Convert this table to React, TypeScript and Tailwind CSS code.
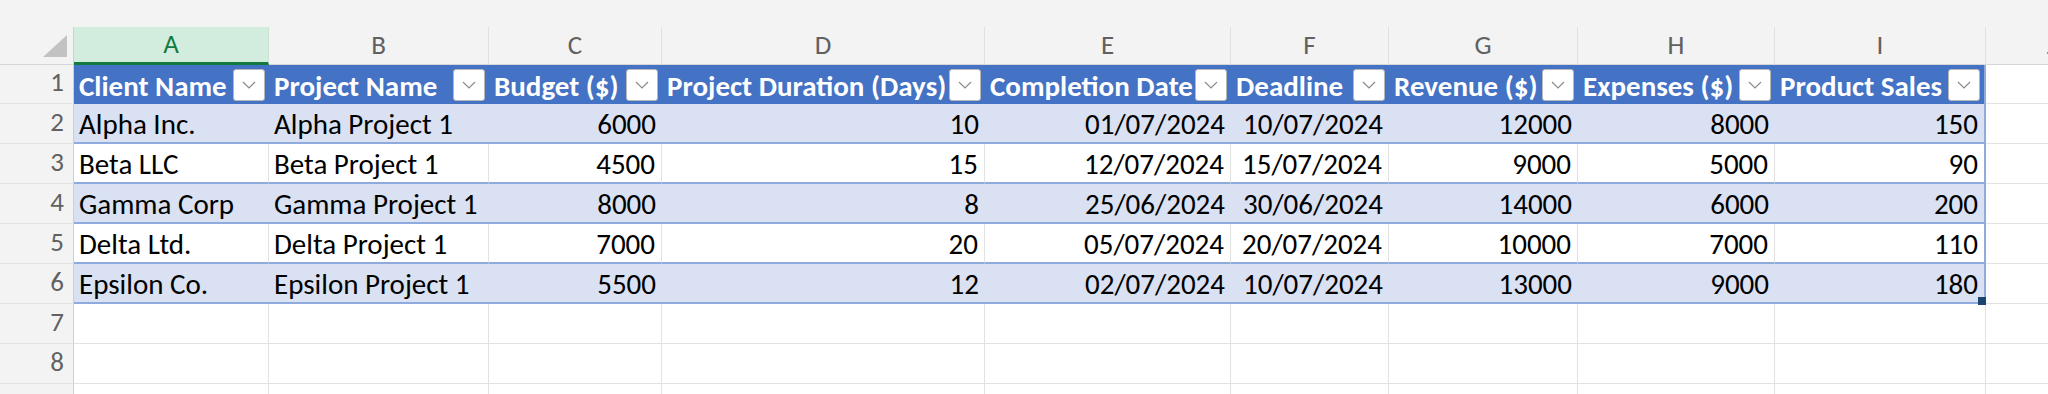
type Cell = string | number

const COLS = [
  { key: 'A', w: 'w-[195px]' },
  { key: 'B', w: 'w-[220px]' },
  { key: 'C', w: 'w-[173px]' },
  { key: 'D', w: 'w-[323px]' },
  { key: 'E', w: 'w-[246px]' },
  { key: 'F', w: 'w-[158px]' },
  { key: 'G', w: 'w-[189px]' },
  { key: 'H', w: 'w-[197px]' },
  { key: 'I', w: 'w-[211px]' },
]

const HEADERS = ['Client Name', 'Project Name', 'Budget ($)', 'Project Duration (Days)', 'Completion Date', 'Deadline', 'Revenue ($)', 'Expenses ($)', 'Product Sales']

const ROWS: Cell[][] = [
  ['Alpha Inc.', 'Alpha Project 1', 6000, 10, '01/07/2024', '10/07/2024', 12000, 8000, 150],
  ['Beta LLC', 'Beta Project 1', 4500, 15, '12/07/2024', '15/07/2024', 9000, 5000, 90],
  ['Gamma Corp', 'Gamma Project 1', 8000, 8, '25/06/2024', '30/06/2024', 14000, 6000, 200],
  ['Delta Ltd.', 'Delta Project 1', 7000, 20, '05/07/2024', '20/07/2024', 10000, 7000, 110],
  ['Epsilon Co.', 'Epsilon Project 1', 5500, 12, '02/07/2024', '10/07/2024', 13000, 9000, 180],
]

// right aligned: numbers and dates
const isRight = (ci: number) => ci >= 2

function RowHead({ n, h }: { n?: number; h: string }) {
  return (
    <div className={`w-[74px] shrink-0 ${h} flex items-end justify-end pr-[9px] pb-[1px] bg-[#f3f3f3] border-r border-b border-r-[#cfcfcf] border-b-[#e2e2e2] text-[27px] text-[#616161]`}>
      {n}
    </div>
  )
}

function Dropdown() {
  return (
    <div className="w-[32px] h-[32px] shrink-0 mr-[4px] self-center bg-white border border-[#b8b8b8] rounded-[3px] grid place-items-center">
      <svg width="14" height="8" viewBox="0 0 14 8" fill="none">
        <polyline points="1,1 7,7 13,1" stroke="#8a8a8a" strokeWidth="1.2" />
      </svg>
    </div>
  )
}

export default function App() {
  return (
    <div className="w-[2048px] h-[394px] overflow-hidden bg-white font-[Carlito,Lato,sans-serif] text-black">
      <div className="h-[27px] bg-[#f3f3f3]" />

      {/* column letters */}
      <div className="flex h-[38px] bg-[#f3f3f3]">
        <div className="w-[74px] shrink-0 flex items-end justify-end pr-[6px] pb-[7px] border-r border-b border-r-[#cfcfcf] border-b-[#d6d6d6]">
          <svg width="24" height="22" viewBox="0 0 24 22">
            <polygon points="24,0 24,22 0,22" fill="#c2c2c2" />
          </svg>
        </div>
        {COLS.map(c => (
          <div
            key={c.key}
            className={`${c.w} shrink-0 flex items-center justify-center text-[27px] ${c.key === 'A' ? 'bg-[#d2eddd] text-[#127a3f] border-b-[3px] border-b-[#127a3f] border-r border-r-[#c9e2d2]' : 'text-[#616161] border-b border-r border-b-[#d6d6d6] border-r-[#e0e0e0]'}`}
          >
            {c.key}
          </div>
        ))}
        <div className="w-[130px] shrink-0 flex items-center justify-center text-[27px] text-[#616161] border-b border-b-[#d6d6d6]">J</div>
      </div>

      {/* row 1: table header */}
      <div className="flex h-[39px]">
        <RowHead n={1} h="h-[39px]" />
        {COLS.map((c, ci) => (
          <div key={c.key} className={`${c.w} shrink-0 flex bg-[#4472c4] text-white font-bold text-[29px] ${ci === 8 ? 'border-r-2 border-r-[#8faadc]' : ''}`}>
            <span className="flex-1 self-end pl-[5px] whitespace-nowrap overflow-hidden leading-[35px]">{HEADERS[ci]}</span>
            <Dropdown />
          </div>
        ))}
        <div className="w-[130px] shrink-0 border-b border-b-[#e2e2e2]" />
      </div>

      {/* data rows */}
      {ROWS.map((r, ri) => {
        const band = ri % 2 === 0
        return (
          <div key={ri} className="flex h-[40px]">
            <RowHead n={ri + 2} h="h-[40px]" />
            {COLS.map((c, ci) => (
              <div
                key={c.key}
                className={`${c.w} shrink-0 relative flex items-end text-[29px] leading-[35px] border-b-2 border-b-[#8faadc] px-[6px] whitespace-nowrap ${isRight(ci) ? 'justify-end' : 'justify-start pl-[5px]'} ${band ? 'bg-[#d9e1f2]' : 'bg-white'} ${ci === 8 ? 'border-r-2 border-r-[#8faadc]' : band ? '' : 'border-r border-r-[#e2e2e2]'}`}
              >
                {r[ci]}
                {ri === 4 && ci === 8 && <span className="absolute -right-[2px] -bottom-[3px] w-[8px] h-[8px] bg-[#1c4572]" />}
              </div>
            ))}
            <div className="w-[130px] shrink-0 border-b border-b-[#e2e2e2]" />
          </div>
        )
      })}

      {/* empty rows (row 9 only peeks in at the bottom) */}
      {[7, 8, 0].map(n => (
        <div key={n} className="flex h-[40px]">
          <RowHead n={n || undefined} h="h-[40px]" />
          {COLS.map(c => (
            <div key={c.key} className={`${c.w} shrink-0 border-r border-b border-[#e2e2e2]`} />
          ))}
          <div className="w-[130px] shrink-0 border-b border-b-[#e2e2e2]" />
        </div>
      ))}
    </div>
  )
}
